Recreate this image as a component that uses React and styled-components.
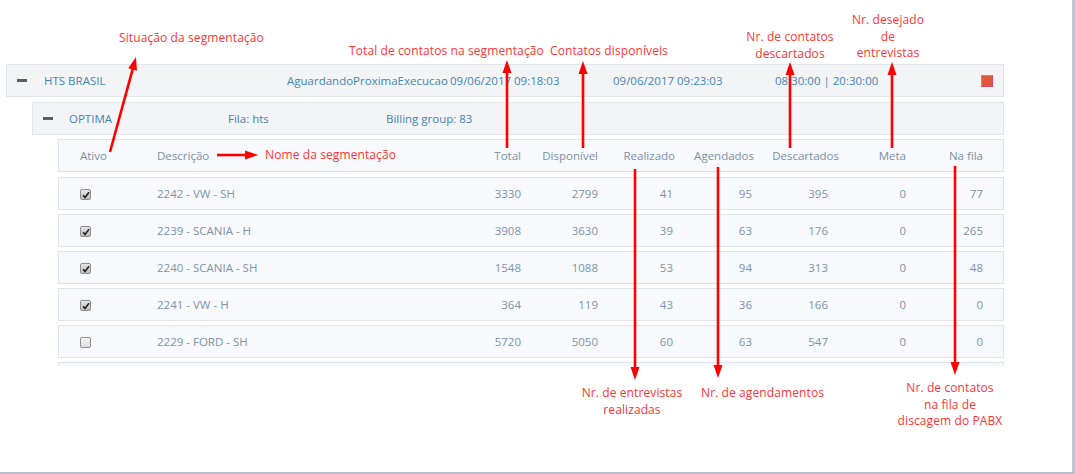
import React from 'react';
import styled, { createGlobalStyle } from 'styled-components';

const GlobalStyle = createGlobalStyle`
  html, body { margin: 0; padding: 0; background: #fff; }
  body { font-family: "Open Sans", "Liberation Sans", sans-serif; }
`;

const Frame = styled.div`
  position: relative;
  width: 1075px;
  height: 474px;
  box-sizing: border-box;
  border-right: 3px solid #bac6d7;
  border-bottom: 2px solid #b6bec8;
  overflow: hidden;
  background: #fff;

  &::after {
    content: '';
    position: absolute;
    right: -3px;
    top: 0;
    width: 3px;
    height: 7px;
    background: #dfe5ee;
  }
`;

const Tree = styled.div`
  width: 998px;
  padding: 64px 0 0 6px;
  font-size: 11.5px;
`;

const GroupRow = styled.div`
  display: grid;
  grid-template-columns: ${p => p.$cols};
  align-items: center;
  height: 33px;
  box-sizing: border-box;
  margin-left: ${p => p.$indent}px;
  margin-bottom: ${p => p.$gap}px;
  padding-right: 10px;
  background: #f3f4f6;
  border: 1px solid #e2e5e9;
  color: #4386b4;
  white-space: nowrap;
`;

const Toggle = styled.span`
  display: block;
  width: 10px;
  height: 3px;
  margin-left: 10px;
  background: #5e5e5e;
`;

const StatusSquare = styled.span`
  display: block;
  width: 10px;
  height: 10px;
  background: #df573c;
  border: 1px solid #ea7c4c;
  border-right-color: #e04a66;
  border-bottom-color: #e04a66;
`;

const tableCols = '98px 313px 51px 77px 77px 79px 85px 67px 77px 1fr';

const TableRow = styled.div`
  display: grid;
  grid-template-columns: ${tableCols};
  align-items: center;
  height: 33px;
  box-sizing: border-box;
  margin-left: 52px;
  margin-bottom: ${p => p.$gap}px;
  background: #f8f9fd;
  border: 1px solid #dfe3ea;
  color: ${p => (p.$head ? '#7a90a2' : '#7b94a6')};
  white-space: nowrap;
`;

const Cell = styled.div`
  text-align: ${p => (p.$num ? 'right' : 'left')};
  padding-left: ${p => p.$pl || 0}px;
  padding-right: ${p => p.$pr || 0}px;
`;

const Body = styled.div`
  height: 189px;
  overflow: hidden;
`;

const Box = styled.span`
  display: inline-flex;
  align-items: center;
  justify-content: center;
  width: 9px;
  height: 9px;
  border: 1px solid #8e8e8e;
  border-radius: 2px;
  background: ${p => (p.$on ? 'linear-gradient(#e6e6e6, #bdbdbd)' : 'linear-gradient(#f6f6f6, #dcdcdc)')};
  vertical-align: middle;
`;

const Note = styled.div`
  position: absolute;
  left: ${p => p.$x}px;
  top: ${p => p.$y}px;
  width: ${p => (p.$w ? `${p.$w}px` : 'auto')};
  text-align: ${p => (p.$w ? 'center' : 'left')};
  font-size: 12px;
  line-height: 16.7px;
  letter-spacing: 0.1px;
  color: #ff3535;
  white-space: nowrap;
`;

const Overlay = styled.svg`
  position: absolute;
  left: 0;
  top: 0;
  pointer-events: none;
`;

const rows = [
  [true, '2242 - VW - SH', 3330, 2799, 41, 95, 395, 0, 77],
  [true, '2239 - SCANIA - H', 3908, 3630, 39, 63, 176, 0, 265],
  [true, '2240 - SCANIA - SH', 1548, 1088, 53, 94, 313, 0, 48],
  [true, '2241 - VW - H', 364, 119, 43, 36, 166, 0, 0],
  [false, '2229 - FORD - SH', 5720, 5050, 60, 63, 547, 0, 0],
];

const heads = ['Total', 'Disponível', 'Realizado', 'Agendados', 'Descartados', 'Meta', 'Na fila'];

function Arrow({ x1, y1, x2, y2 }) {
  const dx = x2 - x1;
  const dy = y2 - y1;
  const len = Math.sqrt(dx * dx + dy * dy);
  const ux = dx / len;
  const uy = dy / len;
  const hl = 13;
  const hw = 4.5;
  const bx = x2 - ux * hl;
  const by = y2 - uy * hl;
  const pts = `${x2},${y2} ${bx - uy * hw},${by + ux * hw} ${bx + uy * hw},${by - ux * hw}`;
  return (
    <g>
      <line x1={x1} y1={y1} x2={bx + ux * 2} y2={by + uy * 2} stroke="#ff0000" strokeWidth="2.6" />
      <polygon points={pts} fill="#ff0000" />
    </g>
  );
}

const arrows = [
  [110, 152, 136, 57],
  [507, 148, 507, 60],
  [583, 148, 583, 61],
  [790, 148, 790, 62],
  [892, 148, 892, 62],
  [217, 155, 258, 155],
  [635, 169, 635, 380],
  [718, 167, 718, 378],
  [955, 166, 955, 375],
];

const notes = [
  { x: 119, y: 30, lines: ['Situação da segmentação'] },
  { x: 349, y: 43, lines: ['Total de contatos na segmentação'] },
  { x: 550, y: 43, lines: ['Contatos disponíveis'] },
  { x: 710, y: 29, w: 160, lines: ['Nr. de contatos', 'descartados'] },
  { x: 808, y: 12, w: 160, lines: ['Nr. desejado', 'de', 'entrevistas'] },
  { x: 265, y: 147, lines: ['Nome da segmentação'] },
  { x: 552, y: 385, w: 160, lines: ['Nr. de entrevistas', 'realizadas'] },
  { x: 701, y: 385, lines: ['Nr. de agendamentos'] },
  { x: 870, y: 380, w: 160, lines: ['Nr. de contatos', 'na fila de', 'discagem do PABX'] },
];

function Check({ on }) {
  return (
    <Box $on={on}>
      {on && (
        <svg width="8" height="8" viewBox="0 0 8 8">
          <path d="M1 4.3 L3 6.4 L7 1.2" fill="none" stroke="#222" strokeWidth="1.6" />
        </svg>
      )}
    </Box>
  );
}

export default function App() {
  return (
    <Frame>
      <GlobalStyle />
      <Tree>
        <GroupRow $indent={0} $gap={5} $cols="37px 243px 163px 163px 162px 1fr auto">
          <Toggle />
          <span>HTS BRASIL</span>
          <span>AguardandoProximaExecucao</span>
          <span>09/06/2017 09:18:03</span>
          <span>09/06/2017 09:23:03</span>
          <span>08:30:00 | 20:30:00</span>
          <StatusSquare />
        </GroupRow>
        <GroupRow $indent={26} $gap={4} $cols="36px 159px 158px 1fr">
          <Toggle />
          <span>OPTIMA</span>
          <span>Fila: hts</span>
          <span>Billing group: 83</span>
        </GroupRow>
        <TableRow $head $gap={5}>
          <Cell $pl={21}>Ativo</Cell>
          <Cell>Descrição</Cell>
          {heads.map(h => (
            <Cell key={h} $num>{h}</Cell>
          ))}
          <Cell />
        </TableRow>
        <Body>
          {rows.map(r => (
            <TableRow key={r[1]} $gap={4}>
              <Cell $pl={21}><Check on={r[0]} /></Cell>
              <Cell>{r[1]}</Cell>
              <Cell $num>{r[2]}</Cell>
              <Cell $num>{r[3]}</Cell>
              <Cell $num $pr={2}>{r[4]}</Cell>
              <Cell $num $pr={2}>{r[5]}</Cell>
              <Cell $num $pr={11}>{r[6]}</Cell>
              <Cell $num>{r[7]}</Cell>
              <Cell $num>{r[8]}</Cell>
              <Cell />
            </TableRow>
          ))}
          <TableRow $gap={4} />
        </Body>
      </Tree>
      {notes.map(n => (
        <Note key={n.lines[0] + n.x} $x={n.x} $y={n.y} $w={n.w}>
          {n.lines.map(l => (
            <div key={l}>{l}</div>
          ))}
        </Note>
      ))}
      <Overlay width="1075" height="474">
        {arrows.map(a => (
          <Arrow key={a.join('-')} x1={a[0]} y1={a[1]} x2={a[2]} y2={a[3]} />
        ))}
      </Overlay>
    </Frame>
  );
}
